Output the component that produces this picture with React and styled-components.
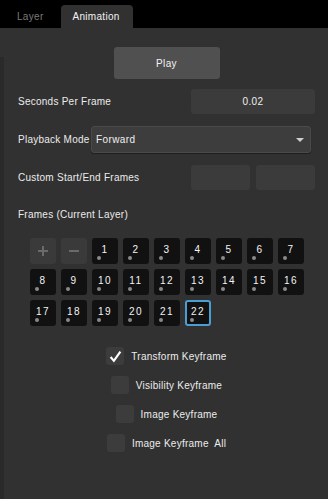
import React from 'react'
import styled, { createGlobalStyle } from 'styled-components'

const GlobalStyle = createGlobalStyle`
  html, body {
    margin: 0;
    padding: 0;
    background: #313131;
  }
  body {
    font-family: "Liberation Sans", Arial, sans-serif;
    font-size: 10px;
    color: #e8e8e8;
  }
`

const Page = styled.div`
  width: 328px;
  height: 499px;
  display: flex;
  flex-direction: column;
  background: #313131;
  overflow: hidden;
`

const TabBar = styled.div`
  height: 28px;
  flex-shrink: 0;
  background: #000;
  display: flex;
  align-items: flex-end;
  padding-left: 5px;
  gap: 4px;
`

const Tab = styled.div`
  height: 23px;
  padding: 0 13px 0 12px;
  display: flex;
  align-items: center;
  border-radius: 4px 4px 0 0;
  background: ${p => (p.active ? '#313131' : 'transparent')};
  color: ${p => (p.active ? '#f2f2f2' : '#7a7a7a')};
  letter-spacing: 0.3px;
`

const Body = styled.div`
  flex: 1;
  display: flex;
`

const Gutter = styled.div`
  width: 4px;
  flex-shrink: 0;
  margin-top: 29px;
  background: #2a2a2a;
`

const Content = styled.div`
  flex: 1;
  min-width: 0;
  display: flex;
  flex-direction: column;
  padding: 19px 13px 0 14px;
`

const PlayRow = styled.div`
  display: flex;
  justify-content: center;
`

const PlayButton = styled.button`
  width: 106px;
  height: 32px;
  border: none;
  border-radius: 3px;
  background: #505050;
  color: #f4f4f4;
  font: inherit;
  letter-spacing: 0.4px;
`

const Row = styled.div`
  display: flex;
  align-items: center;
  justify-content: space-between;
  margin-top: ${p => p.top || 0}px;
`

const Label = styled.span`
  letter-spacing: 0.25px;
  color: #ececec;
  white-space: pre;
`

const Field = styled.div`
  width: ${p => p.w}px;
  flex-shrink: 0;
  height: 25px;
  border-radius: 3px;
  background: #3b3b3b;
  display: flex;
  align-items: center;
  justify-content: center;
  color: #f0f0f0;
  letter-spacing: 0.4px;
`

const FieldPair = styled.div`
  display: flex;
  gap: 6px;
`

const Select = styled.div`
  width: 220px;
  flex-shrink: 0;
  height: 27px;
  box-sizing: border-box;
  margin-right: 4px;
  border: 1px solid #4a4a4a;
  border-radius: 3px;
  background: #3d3d3d;
  box-shadow: 0 1px 1px #1f1f1f;
  display: flex;
  align-items: center;
  justify-content: space-between;
  padding: 0 6px 0 4px;
  color: #f0f0f0;
  letter-spacing: 0.4px;
`

const Caret = styled.span`
  width: 0;
  height: 0;
  border-left: 4px solid transparent;
  border-right: 4px solid transparent;
  border-top: 4px solid #cfcfcf;
`

const SectionTitle = styled.div`
  margin-top: 19px;
  letter-spacing: 0.25px;
  color: #ececec;
`

const Grid = styled.div`
  display: grid;
  grid-template-columns: repeat(9, 26px);
  grid-auto-rows: 26px;
  gap: 5px;
  margin: 18px 0 0 12px;
`

const Cell = styled.div`
  position: relative;
  box-sizing: border-box;
  border-radius: 3px;
  background: #111;
  border: ${p => (p.selected ? '2px solid #4b9ed3' : 'none')};
  display: flex;
  justify-content: center;
  padding-top: ${p => (p.selected ? 5 : 7)}px;
  color: #f4f4f4;
  letter-spacing: 1.5px;
  font-size: 10px;
  line-height: 10px;
`

const Dot = styled.span`
  position: absolute;
  left: ${p => (p.selected ? 3 : 5)}px;
  bottom: ${p => (p.selected ? 2 : 4)}px;
  width: 4px;
  height: 4px;
  border-radius: 50%;
  background: #8a8a8a;
`

const ToolCell = styled.div`
  border-radius: 3px;
  background: #3a3a3a;
  display: flex;
  align-items: center;
  justify-content: center;
`

const Checks = styled.div`
  display: flex;
  flex-direction: column;
  align-items: center;
  gap: 11px;
  margin-top: 21px;
`

const CheckRow = styled.label`
  display: flex;
  align-items: center;
  gap: 7px;
`

const Box = styled.span`
  width: 18px;
  height: 18px;
  border-radius: 3px;
  background: #3c3c3c;
  display: flex;
  align-items: center;
  justify-content: center;
`

const frames = Array.from({ length: 22 }, (_, i) => i + 1)

const checks = [
  { label: 'Transform Keyframe', checked: true },
  { label: 'Visibility Keyframe' },
  { label: 'Image Keyframe' },
  { label: 'Image Keyframe  All' },
]

export default function App() {
  return (
    <Page>
      <GlobalStyle />
      <TabBar>
        <Tab>Layer</Tab>
        <Tab active>Animation</Tab>
      </TabBar>
      <Body>
        <Gutter />
        <Content>
          <PlayRow>
            <PlayButton>Play</PlayButton>
          </PlayRow>
          <Row top={10}>
            <Label>Seconds Per Frame</Label>
            <Field w={124}>0.02</Field>
          </Row>
          <Row top={12}>
            <Label>Playback Mode</Label>
            <Select>
              Forward
              <Caret />
            </Select>
          </Row>
          <Row top={12}>
            <Label>Custom Start/End Frames</Label>
            <FieldPair>
              <Field w={59} />
              <Field w={59} />
            </FieldPair>
          </Row>
          <SectionTitle>Frames (Current Layer)</SectionTitle>
          <Grid>
            <ToolCell>
              <svg width="12" height="12" viewBox="0 0 12 12">
                <path d="M6 1v10M1 6h10" stroke="#6a6a6a" strokeWidth="2" />
              </svg>
            </ToolCell>
            <ToolCell>
              <svg width="12" height="12" viewBox="0 0 12 12">
                <path d="M1 6h10" stroke="#6a6a6a" strokeWidth="2" />
              </svg>
            </ToolCell>
            {frames.map(n => (
              <Cell key={n} selected={n === 22}>
                {n}
                <Dot selected={n === 22} />
              </Cell>
            ))}
          </Grid>
          <Checks>
            {checks.map(c => (
              <CheckRow key={c.label}>
                <Box>
                  {c.checked && (
                    <svg width="13" height="13" viewBox="0 0 12 12">
                      <path d="M1.5 6.5l3 3.5 6-8.5" fill="none" stroke="#fff" strokeWidth="2" />
                    </svg>
                  )}
                </Box>
                <Label>{c.label}</Label>
              </CheckRow>
            ))}
          </Checks>
        </Content>
      </Body>
    </Page>
  )
}
